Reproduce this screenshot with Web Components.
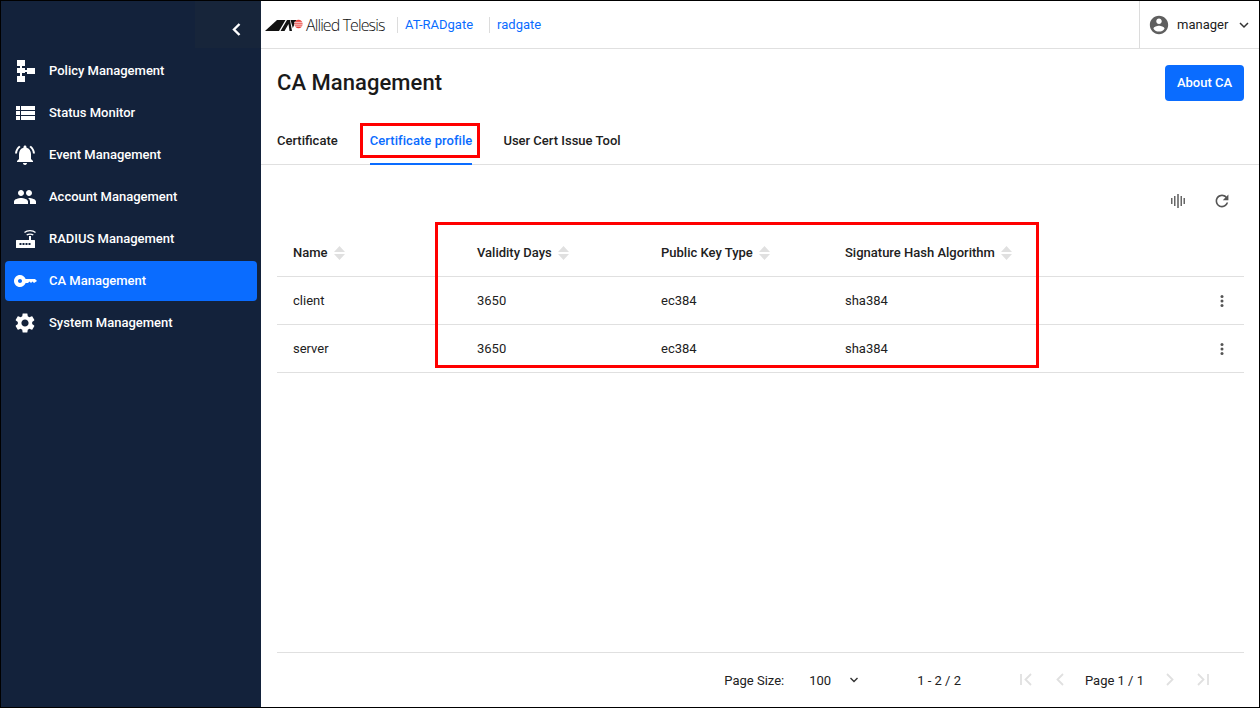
<!DOCTYPE html>
<html>
<head>
<meta charset="utf-8">
<title>CA Management</title>
<style>
  html, body { margin: 0; height: 100%; }
  body { font-family: Roboto, "Liberation Sans", sans-serif; color: #212121; background: #fff; }
</style>
</head>
<body>
<app-shell>
  <side-nav slot="nav">
    <nav-item icon="policy">Policy Management</nav-item>
    <nav-item icon="status">Status Monitor</nav-item>
    <nav-item icon="event">Event Management</nav-item>
    <nav-item icon="account">Account Management</nav-item>
    <nav-item icon="radius">RADIUS Management</nav-item>
    <nav-item icon="key" active>CA Management</nav-item>
    <nav-item icon="gear">System Management</nav-item>
  </side-nav>
  <top-bar slot="top"></top-bar>
  <page-head title="CA Management" action="About CA"></page-head>
  <tab-bar></tab-bar>
  <table-tools></table-tools>
  <data-table></data-table>
  <table-pager></table-pager>
  <!-- red annotation rectangles lie over the content -->
  <mark-box style="left:359px;top:122px;width:114px;height:29px"></mark-box>
  <mark-box style="left:434px;top:221px;width:598px;height:140px"></mark-box>
</app-shell>

<script>
  const ICONS = {
    policy: '<path d="M4 1h8v6H4zM4 9h8v5H4zM14 9h8v6h-8zM4 17h8v6H4zM7 7h2v10H7zM12 11h2v2h-2z"/>',
    status: '<path d="M3 5h4v4H3zM8 5h14v4H8zM3 10h4v4H3zM8 10h14v4H8zM3 15h4v4H3zM8 15h14v4H8z"/>',
    event: '<path d="M7.58 4.08L6.15 2.65C3.75 4.48 2.17 7.3 2.03 10.5h2c.15-2.65 1.51-4.97 3.55-6.42zm12.39 6.42h2c-.15-3.2-1.73-6.02-4.12-7.85l-1.42 1.43c2.02 1.45 3.39 3.77 3.54 6.42zM18 11c0-3.07-1.64-5.64-4.5-6.32V4c0-.83-.67-1.5-1.5-1.5s-1.5.67-1.5 1.5v.68C7.63 5.36 6 7.92 6 11v5l-2 2v1h16v-1l-2-2v-5zm-6 11c.14 0 .27-.01.4-.04.65-.14 1.18-.58 1.44-1.18.1-.24.15-.5.15-.78h-4c.01 1.1.9 2 2.01 2z"/>',
    account: '<path d="M16 11c1.66 0 2.99-1.34 2.99-3S17.66 5 16 5c-1.66 0-3 1.34-3 3s1.34 3 3 3zm-8 0c1.66 0 2.99-1.34 2.99-3S9.66 5 8 5C6.34 5 5 6.34 5 8s1.34 3 3 3zm0 2c-2.33 0-7 1.17-7 3.5V19h14v-2.5c0-2.33-4.67-3.5-7-3.5zm8 0c-.29 0-.62.02-.97.05 1.16.84 1.97 1.97 1.97 3.45V19h6v-2.5c0-2.33-4.67-3.5-7-3.5z"/>',
    radius: '<path d="M3.5 13H16V9h2v4h3.500a.5.5 0 0 1 .5.5v7a.5.5 0 0 1-.5.5h-18a.5.5 0 0 1-.5-.5v-7a.5.5 0 0 1 .5-.5z"/><path fill="#13223b" d="M6.500 16h2v2h-2zM9.500 16h2v2h-2zM12.500 16h2v2h-2zM15.500 16h2v2h-2z"/><path fill="none" stroke="#fff" stroke-width="1.300" d="M11.500 5.500c2.800-2.600 8.200-2.600 11 0M13.700 8c1.600-1.300 5-1.300 6.600 0"/>',
    key: '<path d="M12.65 10C11.83 7.67 9.61 6 7 6c-3.31 0-6 2.690-6 6s2.690 6 6 6c2.610 0 4.830-1.670 5.650-4H15l1.500-1.500L18 14l1.500-1.500L21 14l3-2-2-2H12.650zM7 14c-1.100 0-2-.9-2-2s.9-2 2-2 2 .9 2 2-.9 2-2 2z"/>',
    gear: '<path d="M19.14 12.94c.04-.3.06-.61.06-.94 0-.32-.02-.64-.07-.94l2.03-1.58c.18-.14.23-.41.12-.61l-1.92-3.32c-.12-.22-.37-.29-.59-.22l-2.39.96c-.5-.38-1.03-.7-1.62-.94l-.36-2.54c-.04-.24-.24-.41-.48-.41h-3.84c-.24 0-.43.17-.47.41l-.36 2.54c-.59.24-1.13.57-1.62.94l-2.39-.96c-.22-.08-.47 0-.59.22L2.74 8.87c-.12.21-.08.47.12.61l2.03 1.58c-.05.3-.09.63-.09.94s.02.64.07.94l-2.03 1.58c-.18.14-.23.41-.12.61l1.92 3.32c.12.22.37.29.59.22l2.39-.96c.5.38 1.03.7 1.62.94l.36 2.54c.05.24.24.41.48.41h3.84c.24 0 .44-.17.47-.41l.36-2.54c.59-.24 1.13-.56 1.62-.94l2.39.96c.22.08.47 0 .59-.22l1.92-3.32c.12-.22.07-.47-.12-.61l-2.01-1.58zM12 15.6c-1.98 0-3.6-1.62-3.6-3.6s1.62-3.6 3.6-3.6 3.6 1.62 3.6 3.6-1.62 3.6-3.6 3.6z"/>'
  };

  class AppShell extends HTMLElement {
    constructor() {
      super();
      this.attachShadow({ mode: 'open' }).innerHTML = `
        <style>
          :host { display: grid; grid-template-columns: 260px 1fr; grid-template-rows: 48px 1fr; box-sizing: border-box; height: 708px; border: 1px solid #000; position: relative; overflow: hidden; }
          .nav { grid-row: 1 / 3; display: flex; min-height: 0; }
          .top { grid-column: 2; min-width: 0; }
          main { grid-column: 2; display: flex; flex-direction: column; min-height: 0; }
        </style>
        <div class="nav"><slot name="nav"></slot></div>
        <div class="top"><slot name="top"></slot></div>
        <main><slot></slot></main>`;
    }
  }

  class SideNav extends HTMLElement {
    constructor() {
      super();
      this.attachShadow({ mode: 'open' }).innerHTML = `
        <style>
          :host { display: block; flex: 1; background: #13223b; }
          .collapse { height: 47px; margin-left: 194px; background: #17253a; display: flex; align-items: center; justify-content: center; padding-left: 17px; margin-bottom: 3px; }
          .collapse svg { width: 13px; height: 15px; margin-top: 9px; }
          .list { display: flex; flex-direction: column; gap: 2px; padding: 0 4px; }
        </style>
        <div class="collapse"><svg viewBox="0 0 13 15"><path d="M9.500 2 L4 7.500 L9.500 13" fill="none" stroke="#fff" stroke-width="2.400"/></svg></div>
        <div class="list"><slot></slot></div>`;
    }
  }

  class NavItem extends HTMLElement {
    constructor() {
      super();
      const name = this.getAttribute('icon');
      this.attachShadow({ mode: 'open' }).innerHTML = `
        <style>
          :host { display: flex; align-items: center; height: 40px; border-radius: 4px; color: #fff; font: 500 13px Roboto, sans-serif; }
          :host([active]) { background: #0a6cff; }
          svg { width: 24px; height: 24px; margin: 0 12px 0 8px; fill: #fff; flex: none; }
          span { padding-bottom: 2px; }
        </style>
        <svg viewBox="0 0 24 24">${ICONS[name]}</svg><span><slot></slot></span>`;
    }
  }

  class TopBar extends HTMLElement {
    constructor() {
      super();
      this.attachShadow({ mode: 'open' }).innerHTML = `
        <style>
          :host { display: flex; align-items: center; box-sizing: border-box; height: 48px; border-bottom: 1px solid #e0e0e0; font: 400 13px Roboto, sans-serif; background: #fff; }
          .logo { display: flex; align-items: center; padding-left: 4px; width: 132px; flex: none; }
          .logo svg { width: 38px; height: 12px; flex: none; }
          .logo span { font: 300 16px "Open Sans", Roboto, sans-serif; letter-spacing: -.9px; color: #111; margin-left: 3px; white-space: nowrap; }
          .crumb { color: #0a6cff; border-left: 1px solid #dcdcdc; height: 16px; line-height: 16px; padding-left: 7px; margin-right: 16px; }
          .user { margin-left: auto; align-self: stretch; display: flex; align-items: center; width: 120px; box-sizing: border-box; border-left: 1px solid #dcdcdc; padding-left: 8px; color: #212121; }
          .user .face { width: 22px; height: 22px; fill: #5f5f5f; margin-right: 7px; }
          .user .chev { width: 12px; height: 12px; margin-left: 10px; }
        </style>
        <div class="logo">
          <svg viewBox="0 0 38 12">
            <path fill="#111" d="M0 12 L12 1 L20.500 1 L14 12 Z"/>
            <path fill="#111" d="M15.500 12 L22 1 L25 1 L27 12 L24.500 12 L23.500 5 L19.500 12 Z"/>
            <path fill="#111" d="M25.500 1 L31.500 1 L27.800 9 Z"/>
            <circle cx="33.500" cy="5" r="4.200" fill="#e9413c"/>
            <path stroke="#fff" stroke-width=".8" d="M29 3.300h9M29 5.200h9M29 7.100h9"/>
          </svg>
          <span>Allied Telesis</span>
        </div>
        <span class="crumb">AT-RADgate</span>
        <span class="crumb">radgate</span>
        <div class="user">
          <svg class="face" viewBox="0 0 24 24"><path d="M12 2C6.480 2 2 6.480 2 12s4.480 10 10 10 10-4.480 10-10S17.520 2 12 2zm0 3c1.660 0 3 1.340 3 3s-1.340 3-3 3-3-1.340-3-3 1.340-3 3-3zm0 14.200c-2.500 0-4.710-1.280-6-3.220.03-1.990 4-3.080 6-3.080 1.990 0 5.970 1.090 6 3.080-1.290 1.940-3.500 3.220-6 3.220z"/></svg>
          <span>manager</span>
          <svg class="chev" viewBox="0 0 12 12"><path d="M2 4l4 4 4-4" fill="none" stroke="#333" stroke-width="1.500"/></svg>
        </div>`;
    }
  }

  class PageHead extends HTMLElement {
    constructor() {
      super();
      this.attachShadow({ mode: 'open' }).innerHTML = `
        <style>
          :host { display: flex; align-items: center; justify-content: space-between; height: 68px; padding: 0 15px 0 16px; }
          h1 { margin: 0 0 2px; font: 500 22px Roboto, sans-serif; letter-spacing: .05px; color: #1a1a1a; }
          button { height: 36px; width: 79px; padding: 0 0 2px; border: 0; border-radius: 4px; background: #0a6cff; color: #fff; font: 500 13px Roboto, sans-serif; }
        </style>
        <h1>${this.getAttribute('title')}</h1>
        <button>${this.getAttribute('action')}</button>`;
    }
  }

  class TabBar extends HTMLElement {
    constructor() {
      super();
      this.attachShadow({ mode: 'open' }).innerHTML = `
        <style>
          :host { display: flex; gap: 32px; height: 48px; box-sizing: border-box; padding-left: 16px; border-bottom: 1px solid #e0e0e0; font: 500 13px Roboto, sans-serif; color: #212121; }
          div { height: 48px; line-height: 47px; box-sizing: border-box; }
          .on { color: #0a6cff; border-bottom: 2px solid #0a6cff; letter-spacing: .06px; }
          .on + div { margin-left: -1px; }
        </style>
        <div>Certificate</div>
        <div class="on">Certificate profile</div>
        <div>User Cert Issue Tool</div>`;
    }
  }

  class TableTools extends HTMLElement {
    constructor() {
      super();
      this.attachShadow({ mode: 'open' }).innerHTML = `
        <style>
          :host { display: flex; justify-content: flex-end; align-items: center; gap: 28px; box-sizing: border-box; height: 64px; padding: 8px 29px 0 0; flex: none; }
          svg { fill: #666; display: block; }
          .wave { width: 16px; height: 16px; }
          .redo { width: 16px; height: 16px; fill: #555; }
        </style>
        <svg class="wave" viewBox="0 0 16 16"><path d="M1 5h1.500v6H1zM4 3h1.500v10H4zM7.200 1h1.600v14H7.200zM10.500 3H12v10h-1.500zM13.500 5H15v6h-1.500z"/></svg>
        <svg class="redo" viewBox="2 2 20 20"><path d="M17.650 6.350C16.200 4.900 14.210 4 12 4c-4.420 0-7.990 3.580-7.990 8s3.570 8 7.990 8c3.730 0 6.840-2.550 7.730-6h-2.080c-.82 2.330-3.040 4-5.650 4-3.310 0-6-2.690-6-6s2.690-6 6-6c1.660 0 3.140.69 4.220 1.780L13 11h7V4l-2.350 2.350z"/></svg>`;
    }
  }

  class DataTable extends HTMLElement {
    constructor() {
      super();
      const sort = '<svg viewBox="0 0 11 14"><path fill="#e0e0e0" d="M5.500 0L11 6H0zM0 8h11l-5.500 6z"/></svg>';
      const dots = '<svg viewBox="0 0 4 14"><circle cx="2" cy="2.500" r="1.500"/><circle cx="2" cy="7" r="1.500"/><circle cx="2" cy="11.500" r="1.500"/></svg>';
      const rows = [['client', '3650', 'ec384', 'sha384'], ['server', '3650', 'ec384', 'sha384']];
      const head = ['Name', 'Validity Days', 'Public Key Type', 'Signature Hash Algorithm'];
      this.attachShadow({ mode: 'open' }).innerHTML = `
        <style>
          :host { display: block; margin: 0 15px 0 16px; font: 400 13px Roboto, sans-serif; color: #212121; flex: 1; }
          .row { display: grid; grid-template-columns: 184px 184px 184px 1fr 44px; height: 48px; align-items: center; border-bottom: 1px solid #e0e0e0; box-sizing: border-box; }
          .row > span { padding-left: 16px; }
          .head { font-weight: 500; }
          .head span { display: flex; align-items: center; gap: 6px; }
          .head svg { width: 11px; height: 14px; flex: none; }
          .more { display: flex; justify-content: center; padding: 0 !important; }
          .more svg { width: 4px; height: 14px; fill: #555; display: block; }
        </style>
        <div class="row head">${head.map(h => `<span>${h}${sort}</span>`).join('')}<span></span></div>
        ${rows.map(r => `<div class="row">${r.map(c => `<span>${c}</span>`).join('')}<span class="more">${dots}</span></div>`).join('')}`;
    }
  }

  class TablePager extends HTMLElement {
    constructor() {
      super();
      this.attachShadow({ mode: 'open' }).innerHTML = `
        <style>
          :host { display: flex; align-items: center; justify-content: flex-end; height: 54px; margin: 0 15px 0 16px; padding-right: 33px; border-top: 1px solid #e0e0e0; font: 400 13px Roboto, sans-serif; color: #212121; flex: none; }
          svg { width: 16px; height: 16px; display: block; flex: none; }
          .size { margin-right: 25px; }
          .val { margin-right: 17px; }
          .chev { width: 12px; height: 12px; margin-right: 57px; }
          .count { margin-right: 57px; }
          .p { margin-right: 18px; }
          .p.near { margin-right: 17px; }
          .page { margin: 0 18px 0 0; }
        </style>
        <span class="size">Page Size:</span>
        <span class="val">100</span>
        <svg class="chev" viewBox="0 0 12 12"><path d="M2.500 4l3.500 3.500L9.500 4" fill="none" stroke="#333" stroke-width="1.400"/></svg>
        <span class="count">1 - 2 / 2</span>
        <svg class="p" viewBox="0 0 16 16"><path d="M3 2v11M13 2L7.500 7.500 13 13" fill="none" stroke="#e0e0e0" stroke-width="1.800"/></svg>
        <svg class="p near" viewBox="0 0 16 16"><path d="M11 2L5.500 7.500 11 13" fill="none" stroke="#e0e0e0" stroke-width="1.800"/></svg>
        <span class="page">Page 1 / 1</span>
        <svg class="p near" viewBox="0 0 16 16"><path d="M5 2l5.500 5.500L5 13" fill="none" stroke="#e0e0e0" stroke-width="1.800"/></svg>
        <svg viewBox="0 0 16 16"><path d="M13 2v11M3 2l5.500 5.500L3 13" fill="none" stroke="#e0e0e0" stroke-width="1.800"/></svg>`;
    }
  }

  class MarkBox extends HTMLElement {
    constructor() {
      super();
      this.attachShadow({ mode: 'open' }).innerHTML = `
        <style>:host { display: block; position: absolute; border: 3px solid #f00; pointer-events: none; }</style>`;
    }
  }

  customElements.define('app-shell', AppShell);
  customElements.define('side-nav', SideNav);
  customElements.define('nav-item', NavItem);
  customElements.define('top-bar', TopBar);
  customElements.define('page-head', PageHead);
  customElements.define('tab-bar', TabBar);
  customElements.define('table-tools', TableTools);
  customElements.define('data-table', DataTable);
  customElements.define('table-pager', TablePager);
  customElements.define('mark-box', MarkBox);
</script>
</body>
</html>
